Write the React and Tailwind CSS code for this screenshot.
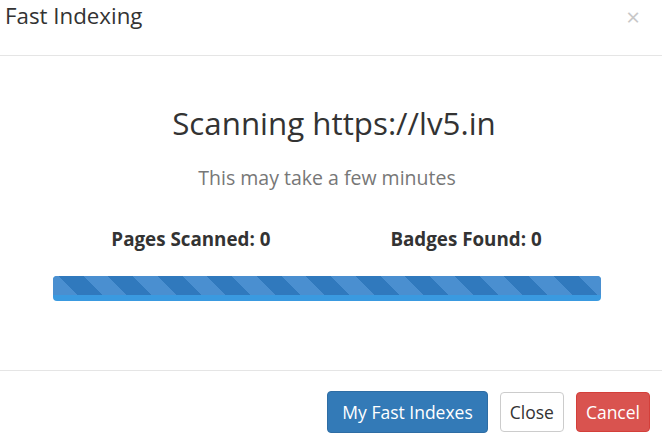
export default function App() {
  return (
    <div className="w-[662px] h-[443px] bg-white overflow-hidden text-[#333]" style={{ fontFamily: '"Open Sans", sans-serif' }}>
      <div className="h-[56px] border-b border-[#e5e5e5] flex items-start justify-between pl-[5px] pr-[22px]">
        <div className="text-[22.3px] leading-[32px] text-[#333]">Fast Indexing</div>
        <div className="text-[24px] leading-[32px] pt-[1px] text-[#c8c8c8]">×</div>
      </div>
      <div className="h-[315px] border-b border-[#e5e5e5] flex flex-col items-center">
        <div className="mt-[47px] ml-[6px] text-[31.3px] leading-[40px] text-[#333]">Scanning https://lv5.in</div>
        <div className="mt-[22px] mr-[8px] text-[19.5px] leading-[26px] text-[#777]">This may take a few minutes</div>
        <div className="w-full pl-[53px] pr-[62px] flex flex-col">
          <div className="mt-[35px] flex justify-center gap-[120px] text-[18.8px] leading-[26px] font-bold text-[#333]">
            <span>Pages Scanned: 0</span>
            <span>Badges Found: 0</span>
          </div>
          <div className="mt-[24px] w-[548px] h-[25px] rounded-[4px] overflow-hidden flex flex-col bg-[#3a9ae0]">
            <div className="h-[19px] bg-[repeating-linear-gradient(45deg,#4a8fd0_0px,#4a8fd0_17px,#3079bd_17px,#3079bd_35px)]"></div>
          </div>
        </div>
      </div>
      <div className="flex justify-end items-start gap-[12px] pr-[12px] pt-[20px]">
        <button className="h-[42px] px-[14px] rounded-[4px] bg-[#337ab7] border border-[#2e6da4] text-white text-[17.5px]">My Fast Indexes</button>
        <button className="h-[40px] mt-[1px] px-[9px] rounded-[4px] bg-white border border-[#ccc] text-[#333] text-[17.5px]">Close</button>
        <button className="h-[40px] mt-[1px] px-[9px] rounded-[4px] bg-[#d9534f] border border-[#d43f3a] text-white text-[17.5px]">Cancel</button>
      </div>
    </div>
  );
}
